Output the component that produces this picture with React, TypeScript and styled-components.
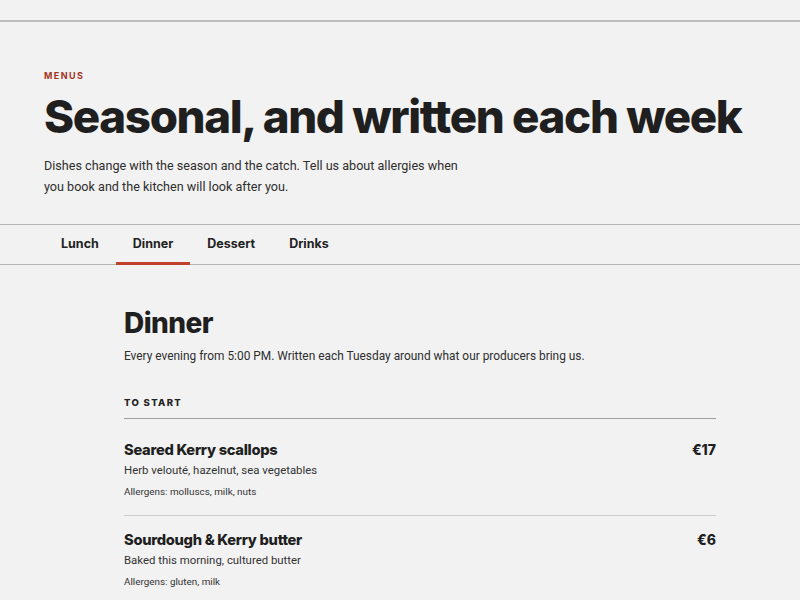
import React, { useState } from "react";
import styled, { createGlobalStyle } from "styled-components";

const GlobalStyle = createGlobalStyle`
  html, body {
    margin: 0;
    padding: 0;
    background: #f2f2f2;
    color: #222;
    font-family: Inter, "Liberation Sans", sans-serif;
  }
`;

const Page = styled.div`
  min-height: 600px;
  border-top: 2px solid #bdbdbd;
  margin-top: 20px;
`;

const Intro = styled.header`
  padding: 48px 44px 27px;
`;

const Eyebrow = styled.div`
  color: #a5321f;
  font-size: 9px;
  font-weight: 700;
  letter-spacing: 0.16em;
  text-transform: uppercase;
`;

const Title = styled.h1`
  margin: 9px 0 11px;
  font-size: 45.7px;
  line-height: 54px;
  font-weight: 800;
  letter-spacing: -0.03em;
  color: #1f1f1f;
`;

const Lead = styled.p`
  margin: 0;
  max-width: 430px;
  font-family: Roboto, "Liberation Sans", sans-serif;
  font-size: 12.6px;
  line-height: 21px;
  color: #2e2e2e;
`;

const TabBar = styled.nav`
  display: flex;
  padding: 0 44px;
  border-top: 1px solid #b5b5b5;
  border-bottom: 1px solid #b5b5b5;
`;

const Tab = styled.button<{ $active?: boolean }>`
  background: none;
  border: none;
  font-family: inherit;
  font-size: 12.5px;
  font-weight: 700;
  color: #222;
  padding: 11px 17px 11px;
  border-bottom: 3px solid ${(p) => (p.$active ? "#c0402c" : "transparent")};
  margin-bottom: -1px;
  cursor: pointer;
`;

const Content = styled.main`
  width: 592px;
  margin: 0 auto;
  padding-top: 40px;
  transform: translateX(20px);
`;

const SectionTitle = styled.h2`
  margin: 0 0 6px;
  font-size: 28px;
  line-height: 36px;
  font-weight: 800;
  letter-spacing: -0.02em;
  color: #1f1f1f;
`;

const SectionNote = styled.p`
  margin: 0 0 32px;
  font-family: Roboto, "Liberation Sans", sans-serif;
  font-size: 11.9px;
  line-height: 18px;
  color: #2e2e2e;
`;

const GroupLabel = styled.h3`
  margin: 0 0 7px;
  padding-bottom: 10px;
  font-size: 9.5px;
  font-weight: 800;
  letter-spacing: 0.14em;
  text-transform: uppercase;
  border-bottom: 1.5px solid #9e9e9e;
`;

const Item = styled.div`
  display: flex;
  justify-content: space-between;
  padding: 14px 0 16px;
  border-bottom: 1px solid #cccccc;
`;

const ItemBody = styled.div`
  display: flex;
  flex-direction: column;
`;

const ItemName = styled.div`
  font-size: 14.7px;
  line-height: 20px;
  font-weight: 800;
  letter-spacing: -0.02em;
  color: #1f1f1f;
`;

const ItemDesc = styled.div`
  margin-top: 1px;
  font-family: Roboto, "Liberation Sans", sans-serif;
  font-size: 11.4px;
  line-height: 18px;
  color: #333;
`;

const Allergens = styled.div`
  margin-top: 6px;
  font-family: Roboto, "Liberation Sans", sans-serif;
  font-size: 9.9px;
  line-height: 14px;
  color: #333;
`;

const Price = styled.div`
  font-size: 14px;
  line-height: 20px;
  font-weight: 800;
  color: #1f1f1f;
`;

const tabs = ["Lunch", "Dinner", "Dessert", "Drinks"];

const starters = [
  {
    name: "Seared Kerry scallops",
    desc: "Herb velouté, hazelnut, sea vegetables",
    allergens: "molluscs, milk, nuts",
    price: "€17",
  },
  {
    name: "Sourdough & Kerry butter",
    desc: "Baked this morning, cultured butter",
    allergens: "gluten, milk",
    price: "€6",
  },
];

export default function App() {
  const [active, setActive] = useState("Dinner");

  return (
    <>
      <GlobalStyle />
      <Page>
        <Intro>
          <Eyebrow>Menus</Eyebrow>
          <Title>Seasonal, and written each week</Title>
          <Lead>
            Dishes change with the season and the catch. Tell us about allergies when
            you book and the kitchen will look after you.
          </Lead>
        </Intro>
        <TabBar>
          {tabs.map((t) => (
            <Tab key={t} $active={t === active} onClick={() => setActive(t)}>
              {t}
            </Tab>
          ))}
        </TabBar>
        <Content>
          <SectionTitle>Dinner</SectionTitle>
          <SectionNote>
            Every evening from 5:00 PM. Written each Tuesday around what our producers bring us.
          </SectionNote>
          <GroupLabel>To start</GroupLabel>
          {starters.map((s) => (
            <Item key={s.name}>
              <ItemBody>
                <ItemName>{s.name}</ItemName>
                <ItemDesc>{s.desc}</ItemDesc>
                <Allergens>Allergens: {s.allergens}</Allergens>
              </ItemBody>
              <Price>{s.price}</Price>
            </Item>
          ))}
        </Content>
      </Page>
    </>
  );
}
